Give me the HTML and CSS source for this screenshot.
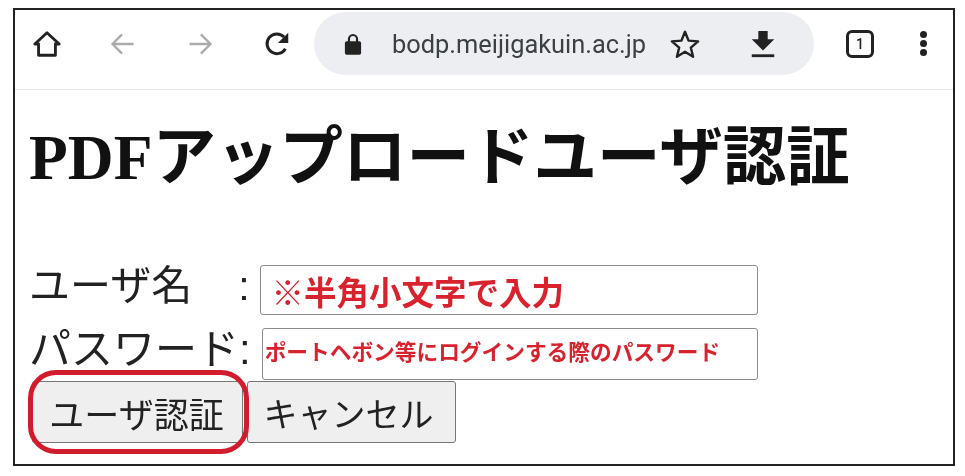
FILE: index.html
```html
<!DOCTYPE html>
<html lang="ja">
<head>
    <meta charset="UTF-8">
    <meta name="viewport" content="width=device-width, initial-scale=1.0">
    <title>PDFアップロードユーザ認証</title>
    <link rel="stylesheet" href="styles.css">
</head>
<body>
    <div class="frame">
        <div class="toolbar">
            <svg class="icon home" viewBox="0 0 32 32"><path d="M16 4 L29 16 H25 V28 H7 V16 H3 Z" fill="none" stroke="#222" stroke-width="3" stroke-linejoin="round"/></svg>
            <svg class="icon back" viewBox="0 0 32 32"><path d="M28 16 H5 M15 5 L4 16 L15 27" fill="none" stroke="#aaa" stroke-width="2.6"/></svg>
            <svg class="icon forward" viewBox="0 0 32 32"><path d="M4 16 H27 M17 5 L28 16 L17 27" fill="none" stroke="#aaa" stroke-width="2.6"/></svg>
            <svg class="icon reload" viewBox="0 0 32 32"><path d="M25 21 A10.5 10.5 0 1 1 23.5 8.5" fill="none" stroke="#222" stroke-width="3.2"/><path d="M28 4 V15 H17 Z" fill="#222"/></svg>
            <div class="address">
                <svg class="lock" viewBox="0 0 20 26"><path d="M5.5 11 V7.5 a4.5 4.5 0 0 1 9 0 V11" fill="none" stroke="#222" stroke-width="2.4"/><rect x="1" y="10" width="18" height="15" rx="2" fill="#222"/></svg>
                <span class="url">bodp.meijigakuin.ac.jp</span>
                <svg class="icon star" viewBox="0 0 32 32"><path d="M16 3 L19.8 12.4 L30 13.2 L22.2 19.8 L24.6 29.6 L16 24.3 L7.4 29.6 L9.8 19.8 L2 13.2 L12.2 12.4 Z" fill="none" stroke="#222" stroke-width="2.6" stroke-linejoin="round"/></svg>
                <svg class="icon download" viewBox="0 0 32 32"><path d="M11 2 H21 V11 H28 L16 23 L4 11 H11 Z" fill="#222"/><rect x="4" y="27" width="24" height="3" fill="#222"/></svg>
            </div>
            <div class="tabs">1</div>
            <div class="menu"><i></i><i></i><i></i></div>
        </div>

        <div class="page">
            <h1>PDFアップロードユーザ認証</h1>
            <div class="row row-name">
                <label for="user" class="label">ユーザ名<span class="gap"></span>:</label>
                <input type="text" id="user" class="field field-name" placeholder="※半角小文字で入力">
            </div>
            <div class="row row-pass">
                <label for="pass" class="label label-pass">パスワード:</label>
                <input type="text" id="pass" class="field field-pass" placeholder="ポートヘボン等にログインする際のパスワード">
            </div>
            <div class="buttons">
                <button class="button button-login">ユーザ認証<span class="ring"></span></button>
                <button class="button button-cancel">キャンセル</button>
            </div>
        </div>
    </div>
</body>
</html>
```

FILE: styles.css
```css
body {
    margin: 0;
    background-color: white;
    font-family: "Liberation Sans", "Noto Sans CJK JP", sans-serif;
}
.frame {
    box-sizing: border-box;
    width: 942px;
    height: 458px;
    margin: 8px 0 0 13px;
    border: 2px solid #222;
    background-color: white;
    overflow: hidden;
    filter: blur(0.4px);
}
.toolbar {
    display: flex;
    align-items: center;
    box-sizing: border-box;
    height: 80px;
    padding: 0 0 12px 17px;
    border-bottom: 1px solid #e8e8e8;
}
.icon {
    display: block;
    width: 30px;
    height: 30px;
    flex: none;
}
.back {
    margin-left: 47px;
    width: 28px;
}
.forward {
    margin-left: 49px;
    width: 28px;
}
.reload {
    margin-left: 48px;
}
.address {
    display: flex;
    align-items: center;
    flex: none;
    width: 500px;
    height: 63px;
    margin: 0 0 0 22px;
    border-radius: 32px;
    background-color: #eceef1;
}
.lock {
    width: 18px;
    height: 24px;
    margin-left: 30px;
}
.url {
    margin-left: 30px;
    font-family: Roboto, "Liberation Sans", sans-serif;
    font-size: 25.4px;
    color: #3c4043;
}
.star {
    margin-left: 24px;
}
.download {
    margin-left: 48px;
}
.tabs {
    box-sizing: border-box;
    width: 28px;
    height: 28px;
    margin-left: 32px;
    border: 3px solid #222;
    border-radius: 6px;
    font-family: Roboto, sans-serif;
    font-size: 14px;
    font-weight: 500;
    line-height: 22px;
    text-align: center;
    color: #222;
}
.menu {
    display: flex;
    flex-direction: column;
    gap: 2px;
    margin-left: 46px;
}
.menu i {
    display: block;
    width: 7px;
    height: 7px;
    border-radius: 50%;
    background-color: #222;
}
.page {
    padding: 0 0 0 14px;
}
h1 {
    margin: 30px 0 0 0;
    font-family: "Liberation Serif", "Noto Sans CJK JP", serif;
    font-size: 63.5px;
    font-weight: bold;
    line-height: 76px;
    white-space: nowrap;
    color: #111;
}
.row {
    display: flex;
    align-items: center;
}
.row-name {
    margin-top: 69px;
}
.row-pass {
    margin-top: 13px;
}
.label {
    padding-bottom: 8px;
    font-size: 41px;
    line-height: 42px;
    color: #222;
    white-space: nowrap;
}
.label-pass {
    font-size: 42px;
}
.gap {
    display: inline-block;
    width: 46px;
}
.field {
    box-sizing: border-box;
    width: 498px;
    border: 1.5px solid #8c8c8c;
    border-radius: 3px;
    background-color: white;
    font-family: "Noto Sans CJK JP", sans-serif;
    font-weight: bold;
}
.field::placeholder {
    color: #d8232f;
    opacity: 1;
}
.field-name {
    height: 50px;
    margin-left: 10px;
    padding: 0 0 0 11px;
    font-size: 32.5px;
}
.field-pass {
    width: 496px;
    height: 52px;
    margin-left: 11px;
    padding: 0 0 8px 2px;
    font-size: 21.7px;
}
.buttons {
    display: flex;
    gap: 4px;
    margin: 1px 0 0 3px;
}
.button {
    box-sizing: border-box;
    height: 62px;
    padding: 0;
    border: 1.5px solid #777;
    border-radius: 3px;
    background-color: #efefef;
    font-family: "Liberation Sans", "Noto Sans CJK JP", sans-serif;
    font-size: 34px;
    color: #222;
}
.button-login {
    position: relative;
    width: 211px;
    padding-right: 2px;
    font-size: 35px;
}
.button-cancel {
    width: 209px;
    padding-right: 6px;
}
.ring {
    position: absolute;
    box-sizing: border-box;
    left: -5px;
    top: -12px;
    width: 221px;
    height: 84px;
    border: 5px solid #d01c2c;
    border-radius: 28px;
}
```
